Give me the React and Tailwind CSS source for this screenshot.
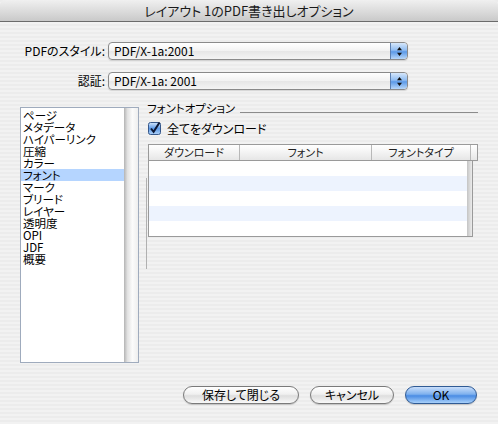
const font = "font-['Noto_Sans_CJK_JP',sans-serif] [font-feature-settings:'palt']";

function Popup({ value }) {
  return (
    <div className="flex h-[18px] w-[300px] overflow-hidden rounded-[4px] border border-[#8a8a8a] bg-[linear-gradient(#ffffff,#f2f2f2_50%,#e6e6e6_51%,#f4f4f4)] shadow-[0_1px_1px_rgba(0,0,0,0.12)]">
      <span className="flex-1 pl-[5px] text-[12px] leading-[16px] text-black">{value}</span>
      <span className="flex w-[17px] items-center justify-center rounded-r-[3px] border-l border-[#5c7fb0] bg-[linear-gradient(#d6e7fb,#8fbcf1_45%,#5b99e7_55%,#b8d7f8)]">
        <svg width="5" height="9" viewBox="0 0 5 9">
          <path d="M2.5 0 L5 3.2 H0 Z M0 5.8 H5 L2.5 9 Z" fill="#111" />
        </svg>
      </span>
    </div>
  );
}

function Button({ children, primary = false, width }) {
  const tone = primary
    ? 'border-[#2f5a94] bg-[linear-gradient(#c9defa,#7fb1ee_45%,#4a8ce4_55%,#a8d0fa)]'
    : 'border-[#7a7a7a] bg-[linear-gradient(#ffffff,#f0f0f0_45%,#dedede_55%,#f8f8f8)]';
  return (
    <button
      className={`flex h-[18px] items-center justify-center rounded-full border text-[12px] leading-none text-black shadow-[0_1px_1px_rgba(0,0,0,0.18)] ${tone} ${width}`}
    >
      {children}
    </button>
  );
}

const items = ['ページ', 'メタデータ', 'ハイパーリンク', '圧縮', 'カラー', 'フォント', 'マーク', 'ブリード', 'レイヤー', '透明度', 'OPI', 'JDF', '概要'];

export default function App() {
  return (
    <div className={`h-[424px] w-[498px] overflow-hidden bg-[repeating-linear-gradient(#ececec_0_2px,#f2f2f2_2px_4px)] ${font}`}>
      <div className="flex h-[22px] items-center justify-center rounded-t-[5px] border-b border-[#6b6b6b] bg-[linear-gradient(#f0f0f0,#d9d9d9_60%,#c9c9c9)] text-[13px] leading-none text-[#1a1a1a]">
        レイアウト 1のPDF書き出しオプション
      </div>

      <div className="mt-[20px] flex items-center">
        <span className="w-[105px] text-right text-[12px] leading-none text-black">PDFのスタイル:</span>
        <span className="ml-[3px]">
          <Popup value="PDF/X-1a:2001" />
        </span>
      </div>
      <div className="mt-[12px] flex items-center">
        <span className="w-[105px] text-right text-[12px] leading-none text-black">認証:</span>
        <span className="ml-[3px]">
          <Popup value="PDF/X-1a: 2001" />
        </span>
      </div>

      <div className="mt-[11px] flex items-start">
        <div className="ml-[20px] mt-[6px] flex h-[256px] w-[119px] border border-[#9fabbd] bg-white">
          <div className="flex-1 pt-[1px]">
            {items.map((it) => (
              <div
                key={it}
                className={`h-[12px] pl-[2px] text-[11.5px] leading-[12px] text-black ${it === 'フォント' ? 'bg-[#b5d5ff]' : ''}`}
              >
                {it}
              </div>
            ))}
          </div>
          <div className="w-[14px] bg-[linear-gradient(to_right,#b4b4b4,#e2e2e2_25%,#fbfbfb_60%,#eeeeee)]" />
        </div>

        <div className="ml-[7px] flex w-[332px] flex-col">
          <div className="flex items-center">
            <span className="pl-[1px] text-[11.5px] leading-[14px] text-black">フォントオプション</span>
            <span className="ml-[5px] mt-[9px] h-px flex-1 bg-[#8c8c8c]" />
          </div>

          <div className="mt-[7px] flex items-center pl-[2px]">
            <svg width="13" height="13" viewBox="0 0 13 13">
              <defs>
                <linearGradient id="cb" x1="0" y1="0" x2="0" y2="1">
                  <stop offset="0" stopColor="#d3e5fb" />
                  <stop offset="0.5" stopColor="#5d9be8" />
                  <stop offset="1" stopColor="#b0d2f8" />
                </linearGradient>
              </defs>
              <rect x="0.5" y="0.5" width="12" height="12" rx="2" fill="url(#cb)" stroke="#35578a" />
              <path d="M3 6.5 L5.6 9.8 L11.5 0.5" stroke="#0b1634" strokeWidth="2" fill="none" />
            </svg>
            <span className="ml-[6px] text-[12px] leading-none text-black">全てをダウンロード</span>
          </div>

          <div className="mt-[9px] flex">
            <div className="mt-[34px] h-[91px] w-px bg-[#b0b0b0]" />
            <div className="ml-px flex w-[330px] flex-col">
              <div className="flex h-[17px] border border-[#9a9a9a] bg-[linear-gradient(#ffffff,#f3f3f3_50%,#e6e6e6)] text-[11px] leading-[15px] text-[#222]">
                <span className="w-[91px] border-r border-[#b8b8b8] text-center">ダウンロード</span>
                <span className="w-[132px] border-r border-[#b8b8b8] text-center">フォント</span>
                <span className="w-[99px] border-r border-[#b8b8b8] text-center">フォントタイプ</span>
                <span className="flex-1" />
              </div>
              <div className="flex w-[325px] border-x border-b border-[#9a9a9a]">
                <div className="flex-1">
                  {[0, 1, 2, 3, 4].map((i) => (
                    <div key={i} className={`h-[15px] ${i % 2 ? 'bg-[#edf3fe]' : 'bg-white'}`} />
                  ))}
                </div>
                <div className="w-[5px] bg-[linear-gradient(to_right,#c4c4c4,#ececec)]" />
              </div>
            </div>
          </div>
        </div>
      </div>

      <div className="mt-[23px] flex justify-end gap-[11px] pr-[21px]">
        <Button width="w-[116px]">保存して閉じる</Button>
        <Button width="w-[84px]">キャンセル</Button>
        <Button primary width="w-[72px]">OK</Button>
      </div>
    </div>
  );
}
